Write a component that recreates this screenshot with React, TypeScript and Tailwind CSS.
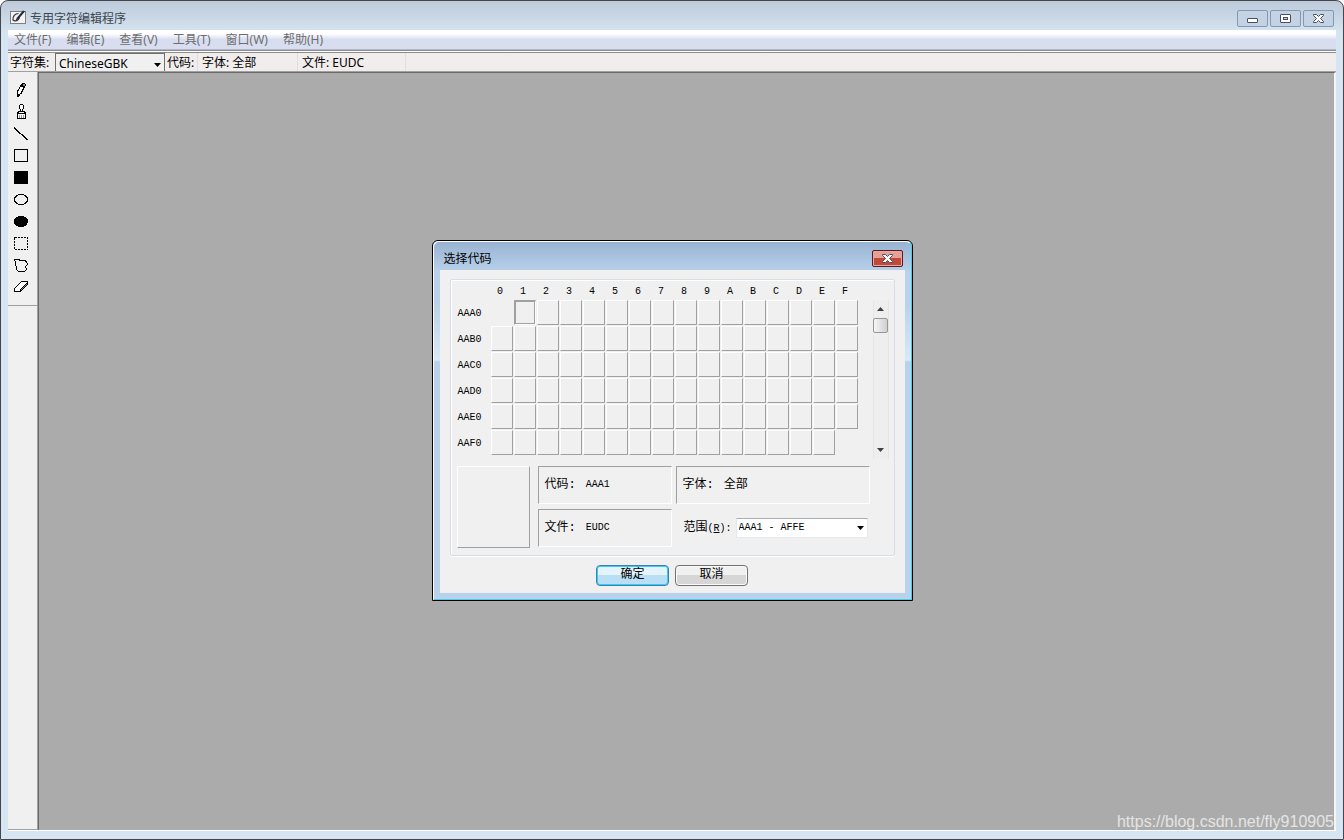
import React from "react";

const menus = ["文件(F)", "编辑(E)", "查看(V)", "工具(T)", "窗口(W)", "帮助(H)"];
const columns = "0123456789ABCDEF".split("");
const rows = ["AAA0", "AAB0", "AAC0", "AAD0", "AAE0", "AAF0"];

const tools: { name: string; icon: React.ReactNode }[] = [
    {
        name: "铅笔",
        icon: (
            <g>
                <path d="M8.5 2.5 L4.5 9.5 V13.5 L7.5 12.5 L11.5 5.5 Z" fill="#fff" stroke="#000" />
                <path d="M9 1 H12 V2 H13 V4 H12 V6 H10 V5 H8 V3 H9 Z" fill="#000" />
                <path d="M10 2 H12 V4 H10 Z" fill="#888" />
                <path d="M4 11 H5 V12 H6 V13 H7 V14 H6 V15 H4 Z" fill="#000" />
                <path d="M10 6 H11 V8 H10 V10 H9 V12 H8 V9 H9 V7 H10 Z" fill="#000" />
            </g>
        ),
    },
    {
        name: "刷子",
        icon: (
            <g>
                <path d="M7 0 H10 V1 H11 V5 H10 V7 H12 V8 H13 V15 H4 V8 H5 V7 H7 V5 H6 V1 H7 Z" fill="#000" />
                <path d="M7 1 H10 V5 H9 V7 H8 V5 H7 Z M6 8 H11 V9 H6 Z" fill="#fff" />
                <path d="M5 10 H12 V14 H5 Z" fill="#fff" />
                <path d="M6.5 11 V14 M8.5 11 V14 M10.5 11 V14" stroke="#999" />
            </g>
        ),
    },
    { name: "直线", icon: <path d="M1 1.5 L14.5 14" stroke="#000" strokeWidth="1.4" /> },
    { name: "空心矩形", icon: <rect x="1.5" y="1.5" width="13" height="12" fill="none" stroke="#000" /> },
    { name: "实心矩形", icon: <rect x="1" y="1" width="14" height="13" fill="#000" /> },
    { name: "空心椭圆", icon: <ellipse cx="8" cy="7.5" rx="6.5" ry="5" fill="none" stroke="#000" /> },
    { name: "实心椭圆", icon: <ellipse cx="8" cy="7.5" rx="7" ry="5.5" fill="#000" /> },
    { name: "矩形选择", icon: <rect x="1.5" y="1.5" width="13" height="12" fill="none" stroke="#000" strokeDasharray="2 1" /> },
    {
        name: "任意形状选择",
        icon: <path d="M1.5 1.5 H5.5 L7.5 2.5 H11.5 L13.5 3.5 L14.5 6.5 L12.5 8.5 L13.5 11.5 L11.5 13.5 H5.5 L3.5 11.5 V9.5 L2.5 6.5 V4.5 Z" fill="none" stroke="#000" />,
    },
    {
        name: "橡皮",
        icon: (
            <g>
                <path d="M1.5 8.5 L8.5 1.5 H14.5 V4.5 L7.5 11.5 H1.5 Z" fill="#fff" stroke="#000" />
                <path d="M7.5 9.5 L14.5 2.5 V4.5 L7.5 11.5 Z" fill="#888" stroke="#000" />
            </g>
        ),
    },
];

const AppIcon = () => (
    <svg width="18" height="16" viewBox="0 0 18 16">
        <rect x=".5" y="2.5" width="15" height="12" fill="#f4f4f4" stroke="#808080" />
        <path d="M8.5 4.5 C5 4.5 2.5 7.5 3 11 C5 13 8.5 11.5 9.5 8.5" fill="none" stroke="#333" strokeWidth="1.2" />
        <path d="M5.5 11.5 L7 8.5 L13 1.5 L15 2.5 L8.5 10 Z" fill="#222b3c" />
    </svg>
);

const CrossIcon = () => (
    <svg width="13" height="11" viewBox="0 0 13 11">
        <path
            d="M1.5 1.5 H4.5 L6.5 3.5 L8.5 1.5 H11.5 V2.5 L8.5 5.5 L11.5 8.5 V9.5 H8.5 L6.5 7.5 L4.5 9.5 H1.5 V8.5 L4.5 5.5 L1.5 2.5 Z"
            fill="#fff"
            stroke="#4a4d63"
            strokeLinejoin="round"
        />
    </svg>
);

const Arrow = ({ up = false }: { up?: boolean }) => (
    <svg width="7" height="4" viewBox="0 0 7 4" className={up ? "rotate-180" : ""}>
        <path d="M0 0 H7 L3.5 4 Z" fill="currentColor" />
    </svg>
);

const captionButton = "flex h-[17px] w-[31px] items-center justify-center rounded-xs border border-[#8796b4] bg-[#c4d3e3]";
const sunken = "flex items-center gap-2.5 border border-t-[#a0a0a0] border-l-[#a0a0a0] border-r-white border-b-white pl-1.5";

const TitleBar = () => (
    <header className="flex h-[29px] shrink-0 items-start justify-between pl-0.5">
        <div className="flex items-start gap-0.5 pt-2 text-[#3c4650]">
            <AppIcon />
            <h1 className="leading-5">专用字符编辑程序</h1>
        </div>
        <div className="flex gap-0.5 pt-[9px] pr-0.5">
            <button aria-label="最小化" className={captionButton}>
                <svg width="11" height="5" viewBox="0 0 11 5" className="mt-1">
                    <rect x=".5" y=".5" width="10" height="4" rx=".5" fill="#fff" stroke="#4a4d63" />
                </svg>
            </button>
            <button aria-label="还原" className={captionButton}>
                <svg width="11" height="9" viewBox="0 0 11 9">
                    <rect x=".5" y=".5" width="10" height="8" rx=".5" fill="#fff" stroke="#4a4d63" />
                    <rect x="3.5" y="3.5" width="4" height="2" fill="#c4d3e3" stroke="#4a4d63" />
                </svg>
            </button>
            <button aria-label="关闭" className={captionButton}>
                <CrossIcon />
            </button>
        </div>
    </header>
);

const InfoBar = () => (
    <div className="flex h-[19px] shrink-0 items-start overflow-hidden border-b border-[#a0a0a0] bg-[#f0edec] leading-[19px] text-black">
        <label htmlFor="charset" className="w-[47px] shrink-0 pl-0.5 whitespace-nowrap">字符集:</label>
        <div className="relative flex h-5 w-[110px] shrink-0">
            <select id="charset" className="w-full appearance-none border border-[#707070] bg-[#f0f0f0] pt-0.5 pl-[3px] leading-4">
                <option>ChineseGBK</option>
            </select>
            <span className="pointer-events-none absolute top-2.5 right-1">
                <Arrow />
            </span>
        </div>
        <span className="w-8 shrink-0 pl-0.5">代码:</span>
        <span className="w-[100px] shrink-0 border-l border-[#e0dddc] pl-1">字体: 全部</span>
        <span className="w-[109px] shrink-0 border-x border-[#e0dddc] pl-1">文件: EUDC</span>
    </div>
);

const ToolBox = () => (
    <aside className="w-[30px] shrink-0 border-r border-b border-[#a0a0a0] bg-[#f0f0f0]">
        <div className="flex flex-col items-center border-b border-[#a0a0a0] pt-[7px] pr-1 pb-1.5">
            {tools.map((tool) => (
                <button key={tool.name} aria-label={tool.name} className="flex h-[22px] w-6 items-center justify-center">
                    <svg width="16" height="16" viewBox="0 0 16 16" shapeRendering="crispEdges">
                        {tool.icon}
                    </svg>
                </button>
            ))}
        </div>
    </aside>
);

const CodeGrid = () => {
    const [selected, setSelected] = React.useState<string>("AAA1");

    return (
        <div className="flex flex-col pl-px">
            <div className="flex h-[18px] items-end pl-[31px] leading-4">
                {columns.map((col) => (
                    <span key={col} className="w-[23px] text-center">{col}</span>
                ))}
            </div>
            {rows.map((row) => (
                <div key={row} className="flex h-[26px] items-start">
                    <span className="w-[33px] leading-7">{row}</span>
                    {columns.map((col) => {
                        const code = row.slice(0, 3) + col;
                        if (code === "AAA0" || code === "AAFF") {
                            return <span key={code} className="w-[23px]" />;
                        }
                        return (
                            <button
                                key={code}
                                aria-label={code}
                                onClick={() => setSelected(code)}
                                className={`mr-px h-[25px] w-[22px] border ${
                                    selected === code
                                        ? "border-t-2 border-r-white border-b-white border-l-[#a0a0a0] border-t-[#a0a0a0] shadow-[inset_1px_0_#a0a0a0,inset_-1px_-1px_#a0a0a0]"
                                        : "border-t-white border-l-white border-r-[#a0a0a0] border-b-[#a0a0a0]"
                                }`}
                            />
                        );
                    })}
                </div>
            ))}
        </div>
    );
};

const ScrollBar = () => (
    <div className="mt-[18px] flex h-[159px] w-4 flex-col items-center border-x border-[#e6e6e6] bg-[#eeeeee] text-[#404040]">
        <button aria-label="向上" className="flex h-[18px] w-full items-center justify-center"><Arrow up /></button>
        <div className="h-[15px] w-[15px] shrink-0 rounded-xs border border-[#979797] bg-linear-to-r from-[#f5f5f5] to-[#d0d0d4]" />
        <button aria-label="向下" className="mt-auto flex h-[17px] w-full items-center justify-center"><Arrow /></button>
    </div>
);

const CodeDialog = () => (
    <div role="dialog" aria-labelledby="dialog-title" className="w-[481px] rounded-t-md border border-black bg-[#b9d1ea]">
        <div className="rounded-t-md border border-t-white border-l-white border-r-[#3fd0e8] border-b-[#3fd0e8] bg-[linear-gradient(#98b3d2,#b9d1ea_30px,#b9d1ea_60px,#dbe8f5_118px,#b9d1ea_120px)] px-1.5 pb-1.5">
            <div className="flex h-7 items-start justify-between pl-1">
                <h2 id="dialog-title" className="pt-[7px] leading-5 text-black">选择代码</h2>
                <button aria-label="关闭" className="mt-2 mr-0.5 flex h-[17px] w-[31px] items-center justify-center rounded-xs border border-[#5a1a22] bg-linear-to-b from-[#e5a196] from-50% to-[#c04a35] to-50% shadow-[inset_0_0_0_1px_#e8a9a0]">
                    <CrossIcon />
                </button>
            </div>
            <div className="bg-[#f0f0f0] px-2.5 pt-[9px] pb-[7px] font-['Liberation_Mono','Noto_Sans_CJK_SC',monospace] text-[10px] text-black">
                <div className="rounded-xs border border-[#d5dfe5] pr-[5px] pb-[7px] pl-1.5 shadow-[inset_1px_1px_#fff,0_1px_#fff]">
                    <div className="flex justify-between pt-0.5">
                        <CodeGrid />
                        <ScrollBar />
                    </div>
                    <div className="mt-[7px] flex gap-2">
                        <div className="h-[82px] w-[73px] border border-t-white border-l-white border-r-[#a0a0a0] border-b-[#a0a0a0]" />
                        <div className="grid grid-cols-[134px_194px] grid-rows-[38px_38px] gap-x-1 gap-y-[5px]">
                            <p className={sunken}><span className="text-xs">代码:</span>AAA1</p>
                            <p className={sunken}><span className="text-xs">字体:</span><span className="text-xs">全部</span></p>
                            <p className={sunken}><span className="text-xs">文件:</span>EUDC</p>
                            <div className="flex items-center gap-1 pl-2">
                                <label htmlFor="range" className="w-12 text-xs whitespace-nowrap">范围<span className="text-[10px]">(<u>R</u>):</span></label>
                                <div className="relative flex">
                                    <select id="range" className="h-5 w-[132px] appearance-none border border-[#e3e9ef] border-t-[#abadb3] bg-white pl-0.5">
                                        <option>AAA1 - AFFE</option>
                                    </select>
                                    <span className="pointer-events-none absolute top-2 right-1"><Arrow /></span>
                                </div>
                            </div>
                        </div>
                    </div>
                </div>
                <div className="mt-[9px] flex justify-center gap-1.5 text-xs leading-4">
                    <button className="h-[21px] w-[73px] rounded-sm border border-[#3c7fb1] bg-linear-to-b from-[#e5f4fc] from-50% to-[#b8dff5] to-50% shadow-[inset_0_0_0_1px_#35cdf5]">确定</button>
                    <button className="h-[21px] w-[73px] rounded-sm border border-[#707070] bg-linear-to-b from-[#f0f0f0] from-50% to-[#d6d6d6] to-50% shadow-[inset_0_0_0_1px_#fafafa]">取消</button>
                </div>
            </div>
        </div>
    </div>
);

const App: React.FC = () => {
    return (
        <div className="relative flex h-screen flex-col rounded-t-lg border border-[#45464c] bg-[#d7e4f1] bg-linear-to-b from-[#bccada] to-[#d7e4f1] to-[32px] px-[7px] pb-2 font-['Noto_Sans','Noto_Sans_CJK_SC',sans-serif] text-xs">
            <TitleBar />
            <nav className="flex h-5 shrink-0 gap-[15px] border-b border-[#b4b8cc] bg-linear-to-b from-white from-20% to-[#d8def0] to-50% pl-1.5 leading-5 text-[#6d6d6d]">
                {menus.map((menu) => (
                    <button key={menu}>{menu}</button>
                ))}
            </nav>
            <div className="h-[3px] shrink-0 border-y border-[#8c8c8c] bg-white" />
            <InfoBar />
            <div className="flex min-h-0 flex-1 border-b border-white">
                <ToolBox />
                <main className="flex flex-1 items-end justify-end border-t border-r-2 border-l border-t-[#696969] border-r-[#f4f4f4] border-l-[#696969] bg-[#ababab]">
                    <span className="text-base leading-[17px] text-[#e4e4e4] font-['Liberation_Sans',sans-serif]">https://blog.csdn.net/fly910905</span>
                </main>
            </div>
            <div className="absolute inset-0 flex items-center justify-center">
                <CodeDialog />
            </div>
        </div>
    );
};

export default App;
